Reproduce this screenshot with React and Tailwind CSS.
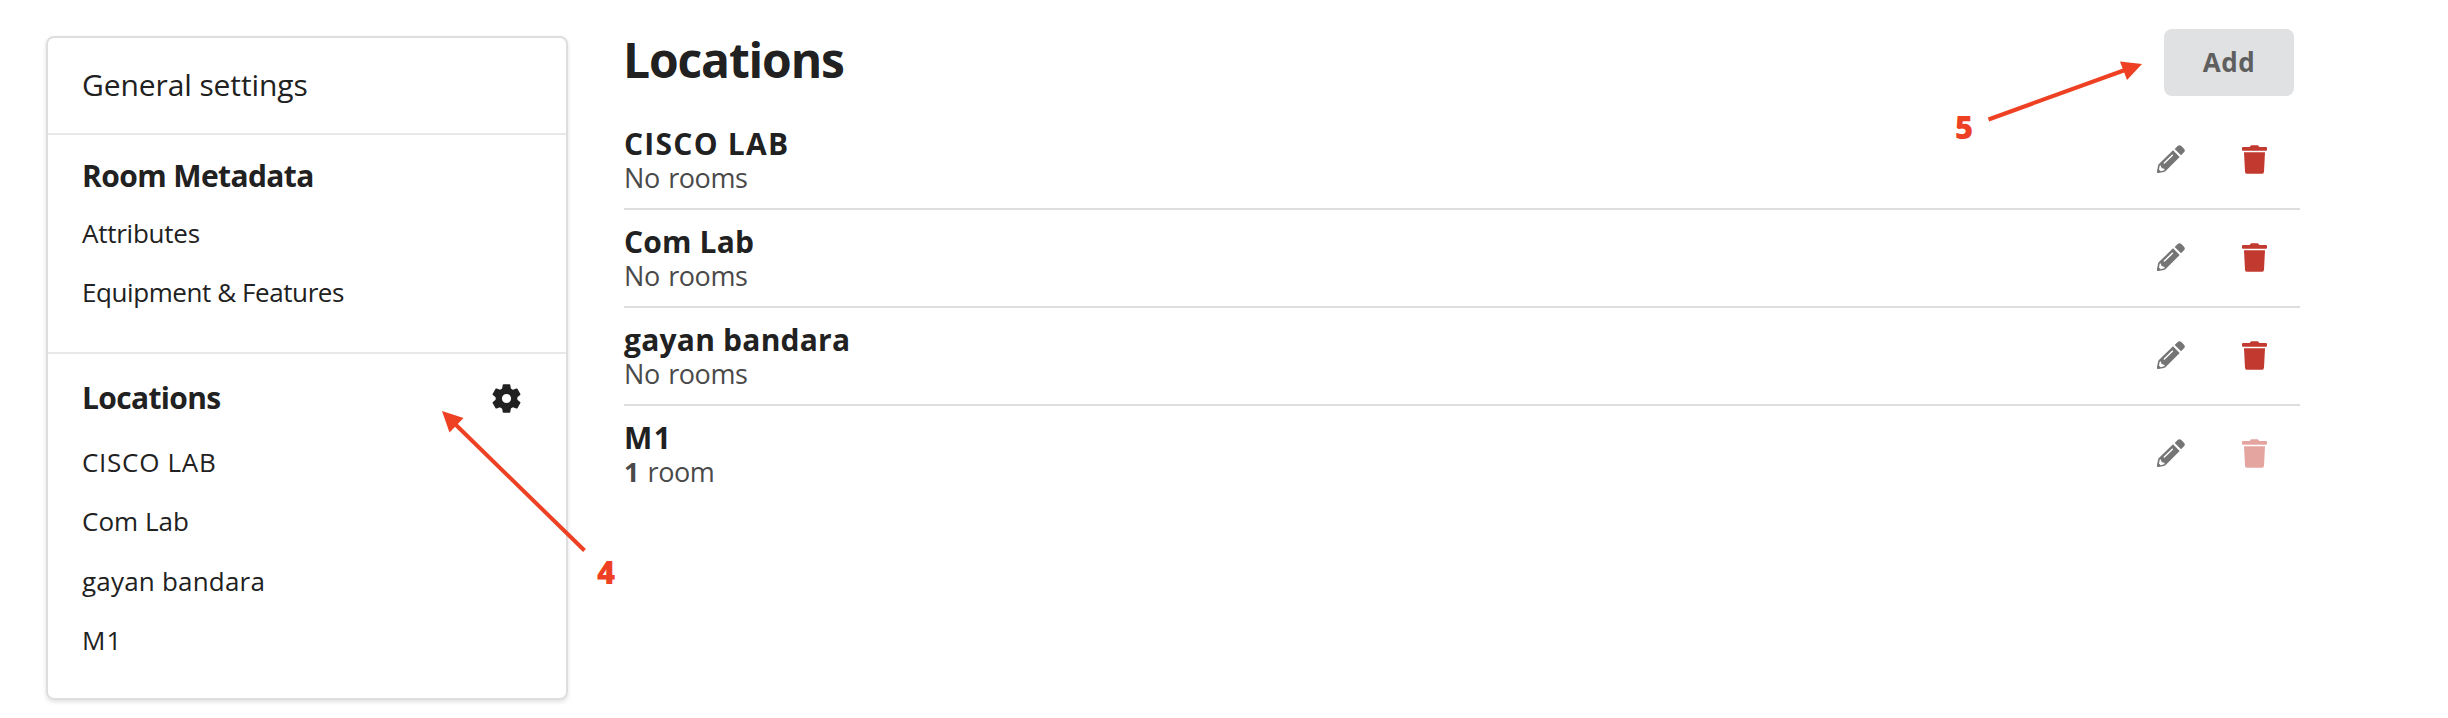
import React from "react";

const metadataLinks = [
  { label: "Attributes", tracking: "tracking-[-0.25px]" },
  { label: "Equipment & Features", tracking: "tracking-[-0.42px]" },
];

const locations = [
  { name: "CISCO LAB", link: "tracking-[0.72px]", title: "tracking-[1.25px]", rooms: 0 },
  { name: "Com Lab", link: "tracking-[0.02px]", title: "tracking-[0.17px]", rooms: 0 },
  { name: "gayan bandara", link: "tracking-[0.2px]", title: "tracking-[0.22px]", rooms: 0 },
  { name: "M1", link: "tracking-[1px]", title: "tracking-[1.5px]", rooms: 1 },
];

function GearIcon() {
  return (
    <svg viewBox="-44 -44 88 88" className="size-[29px] shrink-0" fill="#212121">
      {[0, 60, 120, 180, 240, 300].map((a) => (
        <path key={a} d="M-14 -26 L-11.500 -41 Q-11 -43.5 -9 -43.5 H9 Q11 -43.5 11.5 -41 L14 -26Z" transform={`rotate(${a})`} />
      ))}
      <circle r="23.5" fill="none" stroke="#212121" strokeWidth="19" />
    </svg>
  );
}

function PencilIcon() {
  return (
    <svg viewBox="0 0 84 84" className="size-7 shrink-0">
      <g fill="#757575">
        <path d="M53 12 L62 3 Q67 -2 73 3 L81 11 Q86 17 81 22 L72 31Z" />
        <path d="M48 16 L68 36 L26 78 Q24 80 21 81 L3 84 Q-1 84 0 80 L3 62 Q3.500 60 5 58Z" />
      </g>
      <path d="M22 54 L46 31" stroke="#fff" strokeWidth="4.500" strokeLinecap="round" />
      <path d="M11 61 L14 69 L23 72 L22 76 L11 79 L6 74 L8 62Z" fill="#fff" />
      <path d="M2 72 L11 81 L1 84Z" fill="#757575" />
    </svg>
  );
}

function TrashIcon({ disabled }) {
  return (
    <svg viewBox="0 0 75 87" className={`h-[29px] w-[25px] shrink-0 ${disabled ? "text-[#e4a5a1]" : "text-[#c1392f]"}`} fill="currentColor">
      <path d="M3 6 H22 Q25 6 25 3 Q26 0.500 29 0.500 H46 Q49 0.500 50 3 Q50 6 53 6 H72 Q75 6 75 9 V14 Q75 17 72 17 H3 Q0 17 0 14 V9 Q0 6 3 6Z" />
      <path d="M6 22 H69 L66 80 Q65.500 86.500 59 86.500 H16 Q9.500 86.500 9 80Z" />
    </svg>
  );
}

function SideLink({ label, tracking }) {
  return <a className={`flex h-[59.3px] items-center text-[26px] ${tracking}`}>{label}</a>;
}

function Sidebar() {
  return (
    <aside className="mt-9 ml-[46px] h-[664px] w-[522px] shrink-0 rounded-lg border-2 border-[#dedede] shadow-[0_2px_4px_rgba(0,0,0,0.12)]">
      <div className="flex h-[97px] items-center border-b-2 border-[#e8e8e8] pb-[2px] pl-[34px] text-[30px] tracking-[-0.1px]">
        General settings
      </div>
      <section className="h-[219px] border-b-2 border-[#e8e8e8] pt-[21px] pl-[34px]">
        <h2 className="mb-2 text-[30px] leading-10 font-bold tracking-[-0.6px]">Room Metadata</h2>
        {metadataLinks.map((l) => (
          <SideLink key={l.label} label={l.label} tracking={l.tracking} />
        ))}
      </section>
      <section className="pt-6 pr-[45px] pl-[34px]">
        <div className="mb-[15px] flex items-center justify-between">
          <h2 className="text-[30px] leading-10 font-bold tracking-[-0.65px]">Locations</h2>
          <GearIcon />
        </div>
        {locations.map((l) => (
          <SideLink key={l.name} label={l.name} tracking={l.link} />
        ))}
      </section>
    </aside>
  );
}

function LocationRow({ location, last }) {
  return (
    <li className={`flex h-[98px] items-center justify-between border-b-2 pr-[33px] ${last ? "border-transparent" : "border-[#dedede]"}`}>
      <div>
        <h3 className={`text-[30px] leading-[34px] font-bold ${location.title}`}>{location.name}</h3>
        <p className="text-[27px] leading-[33px] tracking-[-0.45px] [word-spacing:2px] text-[#4a4a4a]">
          {location.rooms === 0 ? (
            "No rooms"
          ) : (
            <>
              <b>{location.rooms}</b> room
            </>
          )}
        </p>
      </div>
      <div className="flex items-center gap-[57.5px] pb-[2px]">
        <PencilIcon />
        <TrashIcon disabled={location.rooms > 0} />
      </div>
    </li>
  );
}

export default function App() {
  return (
    <div className="relative flex h-[718px] w-[2448px] overflow-hidden bg-white font-['Open_Sans',sans-serif] text-[#212121]">
      <Sidebar />
      <main className="ml-14 w-[1676px] pt-[29px]">
        <header className="mb-4 flex h-[67px] items-start justify-between pr-1.5">
          <h1 className="-ml-px text-[48px] leading-[62px] font-bold tracking-[-1.15px]">Locations</h1>
          <button className="h-[67px] w-[130px] rounded-lg bg-[#e0e1e2] text-[26px] font-bold tracking-[0.5px] text-[#5f5f5f]">Add</button>
        </header>
        <ul>
          {locations.map((l, i) => (
            <LocationRow key={l.name} location={l} last={i === locations.length - 1} />
          ))}
        </ul>
      </main>
      <svg className="pointer-events-none absolute inset-0" width="2448" height="718" fill="#ee4023" stroke="#ee4023">
        <path d="M584.500 550.500 L455 424" strokeWidth="4" />
        <path d="M442 411 L463.500 418 L449.500 432.500Z" stroke="none" />
        <path d="M1988.500 119.500 L2125 70" strokeWidth="4" />
        <path d="M2142 64 L2120 61.500 L2127 80Z" stroke="none" />
      </svg>
      <span className="absolute top-[554px] left-[597px] text-[31px] leading-[37px] font-extrabold text-[#ee4023]">4</span>
      <span className="absolute top-[109px] left-[1955px] text-[31px] leading-[37px] font-extrabold text-[#ee4023]">5</span>
    </div>
  );
}
